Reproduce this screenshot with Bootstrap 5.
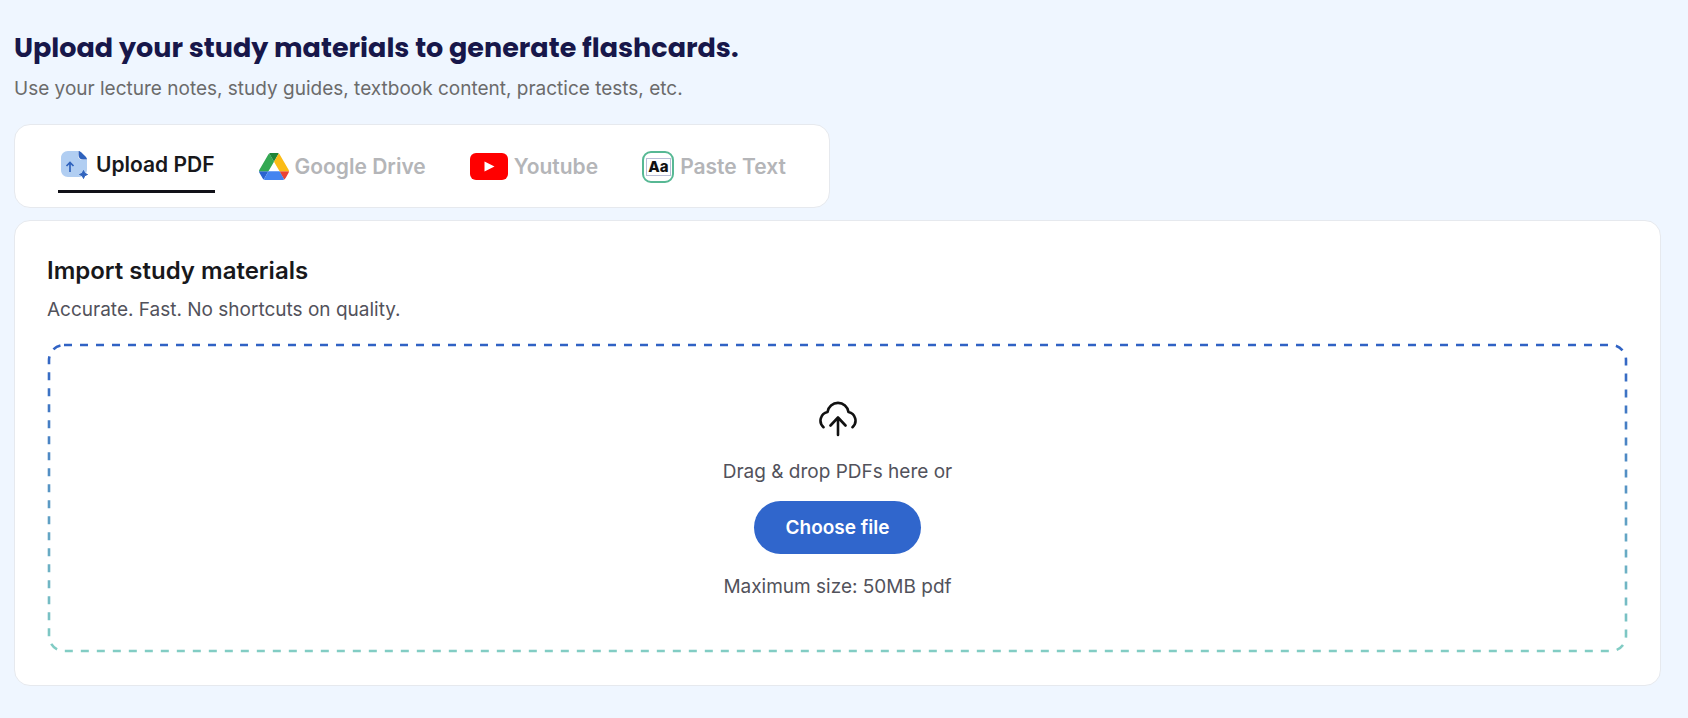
<!DOCTYPE html>
<html lang="en">
<head>
<meta charset="utf-8">
<meta name="viewport" content="width=device-width, initial-scale=1">
<title>Generate flashcards</title>
<link href="https://cdn.jsdelivr.net/npm/bootstrap@5.3.0/dist/css/bootstrap.min.css" rel="stylesheet">
<style>
  body { background: #eff6ff; font-family: Inter, "Liberation Sans", sans-serif; color: #18181b; }
  .page { padding: 32px 27px 32px 14px; }
  .page-title { font: 700 27px/32px Poppins, Inter, sans-serif; color: #17174a; margin-bottom: 10px; }
  .copy { font-size: 19px; line-height: 30px; color: #52525b; }
  .copy-muted { color: #6b6b6b; }
  .panel { background: #fff; border: 1px solid #e6e9ee; border-radius: 16px; }
  .tab-bar { margin: 20px 0 12px; }
  .tabs { column-gap: 44px; padding: 15px 43px 14px; }
  .tabs .nav-link { height: 53px; gap: 6px; border: 0; font-size: 21px; font-weight: 600; line-height: 28px; color: #b4b5b8; background: none; }
  .tabs .nav-link.active { color: #18181b; border-bottom: 3px solid #111118; }
  .import { padding: 32px; }
  .import-title { font-size: 24px; line-height: 36px; font-weight: 600; margin-bottom: 6px; }
  .import-lead { margin-bottom: 18px; }
  .dropzone { padding: 56px 24px 51px; }
  .dropzone .cloud { margin-bottom: 18px; }
  .outline rect { x: 2px; y: 2px; width: calc(100% - 4px); height: calc(100% - 4px); }
  .btn-choose { --bs-btn-color: #fff; --bs-btn-bg: #3066cc; --bs-btn-hover-color: #fff; --bs-btn-hover-bg: #2859b5; --bs-btn-active-bg: #2859b5; font-size: 19px; line-height: 29px; font-weight: 600; padding: 12px 32px; border: 0; margin: 14px 0 18px; }
</style>
</head>
<body>
<main class="page">
  <h1 class="page-title">Upload your study materials to generate flashcards.</h1>
  <p class="copy copy-muted mb-0">Use your lecture notes, study guides, textbook content, practice tests, etc.</p>

  <div class="tab-bar d-flex">
    <div class="panel nav tabs" role="tablist">
      <button class="nav-link active d-flex align-items-center p-0" type="button" role="tab" aria-selected="true">
        <svg width="32" height="30" viewBox="-1 0 32 30" aria-hidden="true">
          <path d="M9 1h10v4c0 3 2 5 5 5h4v9c0 5-3 8-8 8H9c-4 0-7-3-7-7V8c0-4 3-7 7-7z" fill="#b1cef2"/>
          <path d="M19.500 1c1 0 2 .6 3 1.600l3 3C26.500 6.600 28 8 28 9.500h-4c-3 0-4.500-2-4.500-4.500z" fill="#2f62bd"/>
          <path d="M11 22V13M7.500 16 11 12.500l3.500 3.500" fill="none" stroke="#2f62bd" stroke-width="1.700"/>
          <path d="M24.500 20.500l1.200 2.800 2.800 1.200-2.800 1.200-1.200 2.800-1.200-2.800-2.800-1.200 2.800-1.200z" fill="#2f62bd" stroke="#2f62bd"/>
        </svg>
        <span>Upload PDF</span>
      </button>
      <button class="nav-link d-flex align-items-center p-0" type="button" role="tab" aria-selected="false">
        <svg width="30" height="27" viewBox="0 0 87.300 78" aria-hidden="true">
          <path d="m6.600 66.850 3.850 6.650c.8 1.400 1.950 2.500 3.300 3.300L27.500 53H0c0 1.550.4 3.100 1.200 4.500z" fill="#2b63cf"/>
          <path d="M43.650 25 29.900 1.200c-1.350.8-2.500 1.900-3.300 3.300L1.200 48.500A9 9 0 0 0 0 53h27.500z" fill="#34a853"/>
          <path d="M73.550 76.800c1.350-.8 2.500-1.900 3.300-3.300l1.600-2.750L86.100 57.500c.8-1.400 1.200-2.950 1.200-4.500H59.800l5.850 11.500z" fill="#ea4335"/>
          <path d="M43.650 25 57.400 1.200C56.050.4 54.500 0 52.900 0H34.400c-1.600 0-3.150.45-4.500 1.200z" fill="#1f8437"/>
          <path d="M59.800 53H27.500L13.750 76.800c1.350.8 2.900 1.200 4.500 1.200h50.800c1.600 0 3.150-.45 4.500-1.200z" fill="#4484f0"/>
          <path d="M73.400 26.500 60.700 4.500c-.8-1.400-1.950-2.500-3.300-3.300L43.650 25 59.800 53h27.450c0-1.550-.4-3.100-1.200-4.500z" fill="#fbbc16"/>
        </svg>
        <span>Google Drive</span>
      </button>
      <button class="nav-link d-flex align-items-center p-0" type="button" role="tab" aria-selected="false">
        <svg width="38" height="27" viewBox="0 0 38 27" aria-hidden="true">
          <rect x="0" y="0" width="38" height="27" rx="6" fill="#f00"/>
          <path d="M14.500 8.500v10l10-5z" fill="#fff"/>
        </svg>
        <span>Youtube</span>
      </button>
      <button class="nav-link d-flex align-items-center p-0" type="button" role="tab" aria-selected="false">
        <svg width="32" height="32" viewBox="0 0 32 32" aria-hidden="true">
          <rect x="1" y="1" width="30" height="30" rx="8" fill="#fff" stroke="#57b894" stroke-width="2"/>
          <rect x="4.500" y="7.500" width="24" height="17" fill="#fff" stroke="#b9bdd6"/>
          <text x="16.500" y="21" text-anchor="middle" font-size="15" font-weight="800" fill="#111">Aa</text>
        </svg>
        <span>Paste Text</span>
      </button>
    </div>
  </div>

  <section class="panel import">
    <h2 class="import-title">Import study materials</h2>
    <p class="copy import-lead">Accurate. Fast. No shortcuts on quality.</p>
    <div class="dropzone position-relative d-flex flex-column align-items-center text-center">
      <svg class="outline position-absolute top-0 start-0 w-100 h-100 pe-none" aria-hidden="true">
        <defs>
          <linearGradient id="edge" x1="0" y1="0" x2="0" y2="1">
            <stop offset="0" stop-color="#3062c4"/>
            <stop offset="1" stop-color="#82cdc4"/>
          </linearGradient>
        </defs>
        <rect rx="15" fill="none" stroke="url(#edge)" stroke-width="2.600" stroke-dasharray="8 8"/>
      </svg>
      <svg class="cloud" width="40" height="40" viewBox="0 0 40 40" fill="none" stroke="#111" stroke-width="2.600" stroke-linecap="round" stroke-linejoin="round" aria-hidden="true">
        <path d="M5.500 28.200A8.800 8.800 0 0 1 9.500 13A10.600 10.600 0 0 1 30.500 13A8.800 8.800 0 0 1 34.500 28.200M20 36V18.500M12.500 26.500 20 18.500 27.500 26.500"/>
      </svg>
      <p class="copy mb-0">Drag &amp; drop PDFs here or</p>
      <button class="btn btn-choose rounded-pill" type="button">Choose file</button>
      <p class="copy mb-0">Maximum size: 50MB pdf</p>
    </div>
  </section>
</main>
<script src="https://cdn.jsdelivr.net/npm/bootstrap@5.3.0/dist/js/bootstrap.bundle.min.js"></script>
</body>
</html>
